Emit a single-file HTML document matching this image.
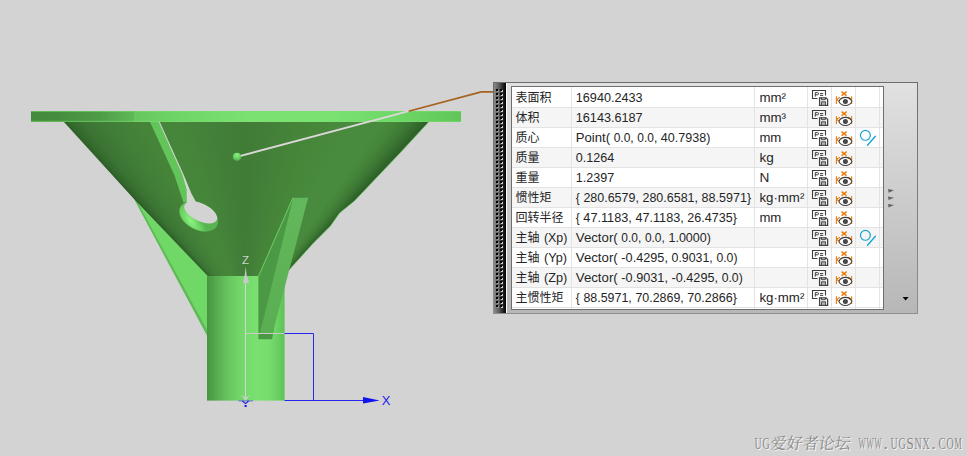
<!DOCTYPE html>
<html><head><meta charset="utf-8"><title>NX measure</title>
<style>html,body{margin:0;padding:0;background:#d3d3d3;overflow:hidden;font-family:"Liberation Sans",sans-serif}#c{position:relative;width:967px;height:456px;overflow:hidden;background:#d3d3d3}svg{display:block}</style>
</head><body><div id="c"><svg width="967" height="456" viewBox="0 0 967 456" style="position:absolute;left:0;top:0"><polygon points="134,198.8 209,277 209,337.6" fill="#6fd866"/><polygon points="134,198.8 136.8,200.8 206.5,329 208,337.6" fill="#5dbb55"/></svg><div style="position:absolute;left:0;top:0;width:967px;height:456px;background:#447f39;background:conic-gradient(from -43.10deg at 245.5px 316.0px, #2e6028 0.00deg, #346a2d 1.04deg, #3b7433 3.05deg, #417d38 7.26deg, #458439 14.62deg, #46863a 23.17deg, #437f39 34.19deg, #417c37 42.95deg, #437f39 50.28deg, #468639 61.44deg, #488a3e 71.35deg, #488b3e 78.55deg, #448438 81.20deg, #3d7935 83.32deg, #346b2d 85.00deg, #2c5d26 86.59deg, #2c5d26 360deg);clip-path:polygon(63.5px 121.5px, 134px 199px, 208px 276.3px, 284.5px 276.3px, 291px 267.7px, 312.9px 243.6px, 330.4px 226px, 339.5px 213px, 354.6px 200.8px, 374.3px 180px, 400px 152.9px, 429px 121.5px)"></div><svg width="967" height="456" viewBox="0 0 967 456" style="position:absolute;left:0;top:0" font-family="Liberation Sans, sans-serif"><defs>
<linearGradient id="gFl" x1="31" x2="461" y1="0" y2="0" gradientUnits="userSpaceOnUse">
<stop offset="0.0000" stop-color="#438a3c"/><stop offset="0.0674" stop-color="#468e3f"/><stop offset="0.1605" stop-color="#4e9b46"/><stop offset="0.2070" stop-color="#58ad50"/><stop offset="0.2384" stop-color="#5fb857"/><stop offset="0.2407" stop-color="#67c65f"/><stop offset="0.3465" stop-color="#6fd566"/><stop offset="0.5093" stop-color="#7be272"/><stop offset="0.6953" stop-color="#7be272"/><stop offset="0.8581" stop-color="#6dd665"/><stop offset="1.0000" stop-color="#5fc657"/>
</linearGradient>
<linearGradient id="gCone" x1="60" x2="430" y1="0" y2="0" gradientUnits="userSpaceOnUse">
<stop offset="0" stop-color="#386f30"/><stop offset="0.2" stop-color="#417c38"/><stop offset="0.45" stop-color="#478639"/>
<stop offset="0.62" stop-color="#498a3e"/><stop offset="0.8" stop-color="#437f39"/><stop offset="1" stop-color="#3a7332"/>
</linearGradient>
<linearGradient id="gCyl" x1="207" x2="284.5" y1="0" y2="0" gradientUnits="userSpaceOnUse">
<stop offset="0.000" stop-color="#489641"/><stop offset="0.065" stop-color="#4f9f48"/><stop offset="0.168" stop-color="#5cb454"/><stop offset="0.297" stop-color="#6ac862"/><stop offset="0.465" stop-color="#74d96b"/><stop offset="0.658" stop-color="#7ae171"/><stop offset="0.787" stop-color="#77de6e"/><stop offset="0.903" stop-color="#6bd163"/><stop offset="1.000" stop-color="#5fc257"/>
</linearGradient>
<linearGradient id="gGrip" x1="493" x2="506" y1="0" y2="0" gradientUnits="userSpaceOnUse">
<stop offset="0" stop-color="#929292"/><stop offset="0.45" stop-color="#5e5e5e"/><stop offset="0.8" stop-color="#1e1e1e"/><stop offset="1" stop-color="#000"/>
</linearGradient>
<linearGradient id="gPanel" x1="0" x2="0" y1="82" y2="314" gradientUnits="userSpaceOnUse">
<stop offset="0" stop-color="#e1e1e1"/><stop offset="1" stop-color="#b7b7b7"/>
</linearGradient>
<linearGradient id="gBorder" x1="0" x2="0" y1="82" y2="314" gradientUnits="userSpaceOnUse">
<stop offset="0" stop-color="#6c6c6c"/><stop offset="1" stop-color="#8e8e8e"/>
</linearGradient>
<radialGradient id="gRim" cx="193.5" cy="224" r="17" gradientUnits="userSpaceOnUse" gradientTransform="rotate(27 193.5 224) translate(193.5 224) scale(1.5 0.6) translate(-193.5 -224)">
<stop offset="0" stop-color="#8ef584"/><stop offset="0.45" stop-color="#70d868"/><stop offset="1" stop-color="#58b450"/></radialGradient>
<radialGradient id="gSph" cx="0.5" cy="0.28" r="0.8"><stop offset="0" stop-color="#84f27a"/><stop offset="0.5" stop-color="#6cd464"/><stop offset="1" stop-color="#4a9c43"/></radialGradient>
<pattern id="pDots" x="496" y="89" width="8" height="4" patternUnits="userSpaceOnUse">
<rect x="1" y="1" width="2" height="2" fill="#fff" fill-opacity="0.28"/><rect x="0" y="0" width="2" height="2" fill="#000"/>
<rect x="5" y="1" width="2" height="2" fill="#fff" fill-opacity="0.75"/><rect x="4" y="0" width="2" height="2" fill="#000"/>
</pattern>
<linearGradient id="gRib" x1="0" x2="0" y1="198" y2="338" gradientUnits="userSpaceOnUse">
<stop offset="0" stop-color="#62b85a"/><stop offset="1" stop-color="#5aae52"/></linearGradient>
</defs><path d="M428.6 122 L400 152.9 L374.3 180 L354.6 200.8 L339.5 213 L330.4 226 L312.9 243.6 L291 267.7" stroke="#5cbf54" stroke-width="0.9" stroke-opacity="0.75" fill="none"/><rect x="207" y="276" width="77.6" height="124.6" fill="url(#gCyl)"/><polygon points="293,197.7 258.4,276 258.4,339.2 272,339.2 273,334 293.6,197.7" fill="#4b9944"/><polygon points="293.3,197.7 308.2,197.7 272.4,334 259.8,334" fill="url(#gRib)"/><path d="M293 197.7 L258.6 276" stroke="#6fd866" stroke-width="0.9" fill="none"/><polygon points="149.8,121.5 158.6,121.5 182.4,175 186.4,189.3 187.3,202 183.5,202.5 174.3,175" fill="#62c55a"/><ellipse cx="198.7" cy="216.4" rx="20.7" ry="13.3" transform="rotate(27 198.7 216.4)" fill="url(#gRim)"/><polygon points="158.5,121.5 159.6,121.5 183.8,175 191.4,193.5 196,202 187,203.5 186.4,189.3 182.4,175" fill="#d2d8d0"/><ellipse cx="200.7" cy="212.4" rx="17.8" ry="8.8" transform="rotate(25.5 200.7 212.4)" fill="#d3d3d3"/><rect x="31" y="111" width="430" height="11" fill="url(#gFl)"/><rect x="31" y="120.8" width="430" height="1.1" fill="#7be272" fill-opacity="0.55"/><rect x="31" y="111" width="430" height="1" fill="#7be272" fill-opacity="0.5"/><path d="M237 156.8 L409.6 110.95" stroke="#dcd8da" stroke-width="1.9" fill="none"/><path d="M408.6 111.2 L481.3 91.9 L493.5 91.9" stroke="#a6621f" stroke-width="1.7" fill="none" stroke-linejoin="round"/><circle cx="237" cy="156.8" r="4.1" fill="url(#gSph)"/><path d="M245.5 276 V400" stroke="#d4d4d4" stroke-width="1" fill="none"/><path d="M245.5 333.5 H284.5" stroke="#c9c9c9" stroke-width="1" fill="none"/><polygon points="245.7,266.5 244.6,276 246.8,276" fill="#c4c4c4"/><polygon points="244.4,276 247,276 249.2,283 243,283" fill="#c8c8c8"/><path d="M284.5 333.5 H313.5 V400.5" stroke="#2626ee" stroke-width="1" fill="none"/><path d="M284.5 400.5 H364" stroke="#2626ee" stroke-width="1" fill="none"/><polygon points="363,397 379.6,400.5 363,403.4" fill="#1212ec"/><text x="381.8" y="404.6" font-size="13" fill="#1a1af2">X</text><text x="242" y="264.3" font-size="11.5" fill="#cdd6cb">Z</text><path d="M242 395.5 L245.5 399.8 L249.2 395.5" stroke="#d4d4d4" stroke-width="1" fill="none"/><polygon points="243.6,397.3 247.4,397.3 245.5,400.4" fill="#cfcfcf"/><path d="M238.5 400.9 H253" stroke="#2a2ae0" stroke-width="1" fill="none" stroke-opacity="0.6"/><path d="M242.4 401 L245.5 403.6 L248.6 401" stroke="#1a1ae0" stroke-width="1.1" fill="none"/><rect x="244.6" y="405" width="2" height="2" fill="#1010e8"/><rect x="493" y="82" width="425" height="232" fill="url(#gPanel)"/><rect x="493" y="82" width="13" height="232" fill="url(#gGrip)"/><rect x="496" y="89" width="8" height="219" fill="url(#pDots)"/><rect x="506" y="83" width="1" height="230" fill="#fff"/><rect x="493.5" y="82.5" width="424" height="231" fill="none" stroke="url(#gBorder)" stroke-width="1"/><rect x="511.5" y="86.5" width="372" height="223" fill="#fff" stroke="#6e6e6e" stroke-width="1"/><rect x="512" y="108" width="371" height="19" fill="#f5f5f5"/><rect x="512" y="148" width="371" height="19" fill="#f5f5f5"/><rect x="512" y="188" width="371" height="19" fill="#f5f5f5"/><rect x="512" y="228" width="371" height="19" fill="#f5f5f5"/><rect x="512" y="268" width="371" height="19" fill="#f5f5f5"/><rect x="512" y="107" width="371" height="1" fill="#e3e3e3"/><rect x="512" y="127" width="371" height="1" fill="#e3e3e3"/><rect x="512" y="147" width="371" height="1" fill="#e3e3e3"/><rect x="512" y="167" width="371" height="1" fill="#e3e3e3"/><rect x="512" y="187" width="371" height="1" fill="#e3e3e3"/><rect x="512" y="207" width="371" height="1" fill="#e3e3e3"/><rect x="512" y="227" width="371" height="1" fill="#e3e3e3"/><rect x="512" y="247" width="371" height="1" fill="#e3e3e3"/><rect x="512" y="267" width="371" height="1" fill="#e3e3e3"/><rect x="512" y="287" width="371" height="1" fill="#e3e3e3"/><rect x="512" y="307" width="371" height="1" fill="#e3e3e3"/><rect x="571" y="87" width="1" height="222" fill="#e3e3e3"/><rect x="754" y="87" width="1" height="222" fill="#e3e3e3"/><rect x="807" y="87" width="1" height="222" fill="#e3e3e3"/><rect x="831" y="87" width="1" height="222" fill="#e3e3e3"/><rect x="855" y="87" width="1" height="222" fill="#e3e3e3"/><rect x="879" y="87" width="1" height="222" fill="#e3e3e3"/><polygon points="888,189.1 894,190.3 888.6,192.70000000000002" fill="#505050" fill-opacity="0.85"/><polygon points="888,196.5 894,197.70000000000002 888.6,200.10000000000002" fill="#505050" fill-opacity="0.85"/><polygon points="888,203.89999999999998 894,205.1 888.6,207.5" fill="#505050" fill-opacity="0.85"/><polygon points="902.6,297 908.6,297 905.6,300.4" fill="#000"/><g transform="translate(0 87)" fill="none" stroke="#3e3e3e">
<path d="M817.5 11.5 H812.5 V3.5 H825.5 V8.4" stroke-width="1.1"/>
<path d="M815.3 9.6 V5.6 H817.4 Q818.6 5.6 818.6 6.7 Q818.6 7.8 817.4 7.8 H815.3" stroke-width="1"/>
<path d="M820 6.6 H823.2 M820 8.4 H823.2" stroke-width="1"/>
<path d="M819.6 10.8 H826 L827.6 12.4 V18.3 H819.6 Z" fill="#fff" stroke-width="1.3"/>
<path d="M821.5 10.8 V12.7 H825.3 V10.8" stroke-width="1"/>
<rect x="821.6" y="14.8" width="3.9" height="3.5" fill="#b4b4b4" stroke-width="0.9"/>
</g><g transform="translate(0 87)" fill="none">
<path d="M841.6 4.6 L846.6 8.7 M846.6 4.6 L841.6 8.7" stroke="#ee7800" stroke-width="1.45"/>
<path d="M836.4 9.2 V16.9 M836.6 12.6 L839.8 10.2 M836.6 12.6 L839.8 14.6" stroke="#ee7800" stroke-width="1.1"/>
<path d="M851.6 9.2 V16.9 M851.4 12.6 L848.4 10.2" stroke="#ee7800" stroke-width="1.1"/>
<path d="M838.9 14.4 C841.2 9.0 849.6 9.0 851.9 14.4 C849.6 19.9 841.2 19.9 838.9 14.4 Z" fill="#fff" stroke="#3e3e3e" stroke-width="1.1"/>
<circle cx="845.4" cy="14.4" r="2.5" fill="#474747"/>
</g><g transform="translate(0 107)" fill="none" stroke="#3e3e3e">
<path d="M817.5 11.5 H812.5 V3.5 H825.5 V8.4" stroke-width="1.1"/>
<path d="M815.3 9.6 V5.6 H817.4 Q818.6 5.6 818.6 6.7 Q818.6 7.8 817.4 7.8 H815.3" stroke-width="1"/>
<path d="M820 6.6 H823.2 M820 8.4 H823.2" stroke-width="1"/>
<path d="M819.6 10.8 H826 L827.6 12.4 V18.3 H819.6 Z" fill="#fff" stroke-width="1.3"/>
<path d="M821.5 10.8 V12.7 H825.3 V10.8" stroke-width="1"/>
<rect x="821.6" y="14.8" width="3.9" height="3.5" fill="#b4b4b4" stroke-width="0.9"/>
</g><g transform="translate(0 107)" fill="none">
<path d="M841.6 4.6 L846.6 8.7 M846.6 4.6 L841.6 8.7" stroke="#ee7800" stroke-width="1.45"/>
<path d="M836.4 9.2 V16.9 M836.6 12.6 L839.8 10.2 M836.6 12.6 L839.8 14.6" stroke="#ee7800" stroke-width="1.1"/>
<path d="M851.6 9.2 V16.9 M851.4 12.6 L848.4 10.2" stroke="#ee7800" stroke-width="1.1"/>
<path d="M838.9 14.4 C841.2 9.0 849.6 9.0 851.9 14.4 C849.6 19.9 841.2 19.9 838.9 14.4 Z" fill="#fff" stroke="#3e3e3e" stroke-width="1.1"/>
<circle cx="845.4" cy="14.4" r="2.5" fill="#474747"/>
</g><g transform="translate(0 127)" fill="none" stroke="#3e3e3e">
<path d="M817.5 11.5 H812.5 V3.5 H825.5 V8.4" stroke-width="1.1"/>
<path d="M815.3 9.6 V5.6 H817.4 Q818.6 5.6 818.6 6.7 Q818.6 7.8 817.4 7.8 H815.3" stroke-width="1"/>
<path d="M820 6.6 H823.2 M820 8.4 H823.2" stroke-width="1"/>
<path d="M819.6 10.8 H826 L827.6 12.4 V18.3 H819.6 Z" fill="#fff" stroke-width="1.3"/>
<path d="M821.5 10.8 V12.7 H825.3 V10.8" stroke-width="1"/>
<rect x="821.6" y="14.8" width="3.9" height="3.5" fill="#b4b4b4" stroke-width="0.9"/>
</g><g transform="translate(0 127)" fill="none">
<path d="M841.6 4.6 L846.6 8.7 M846.6 4.6 L841.6 8.7" stroke="#ee7800" stroke-width="1.45"/>
<path d="M836.4 9.2 V16.9 M836.6 12.6 L839.8 10.2 M836.6 12.6 L839.8 14.6" stroke="#ee7800" stroke-width="1.1"/>
<path d="M851.6 9.2 V16.9 M851.4 12.6 L848.4 10.2" stroke="#ee7800" stroke-width="1.1"/>
<path d="M838.9 14.4 C841.2 9.0 849.6 9.0 851.9 14.4 C849.6 19.9 841.2 19.9 838.9 14.4 Z" fill="#fff" stroke="#3e3e3e" stroke-width="1.1"/>
<circle cx="845.4" cy="14.4" r="2.5" fill="#474747"/>
</g><g transform="translate(0 127)" fill="none" stroke="#12a4cf" stroke-linecap="round">
<circle cx="865.4" cy="8.3" r="4.95" stroke-width="1.2"/>
<path d="M867.5 18.3 L875.4 9.3" stroke-width="1.3"/>
</g><g transform="translate(0 147)" fill="none" stroke="#3e3e3e">
<path d="M817.5 11.5 H812.5 V3.5 H825.5 V8.4" stroke-width="1.1"/>
<path d="M815.3 9.6 V5.6 H817.4 Q818.6 5.6 818.6 6.7 Q818.6 7.8 817.4 7.8 H815.3" stroke-width="1"/>
<path d="M820 6.6 H823.2 M820 8.4 H823.2" stroke-width="1"/>
<path d="M819.6 10.8 H826 L827.6 12.4 V18.3 H819.6 Z" fill="#fff" stroke-width="1.3"/>
<path d="M821.5 10.8 V12.7 H825.3 V10.8" stroke-width="1"/>
<rect x="821.6" y="14.8" width="3.9" height="3.5" fill="#b4b4b4" stroke-width="0.9"/>
</g><g transform="translate(0 147)" fill="none">
<path d="M841.6 4.6 L846.6 8.7 M846.6 4.6 L841.6 8.7" stroke="#ee7800" stroke-width="1.45"/>
<path d="M836.4 9.2 V16.9 M836.6 12.6 L839.8 10.2 M836.6 12.6 L839.8 14.6" stroke="#ee7800" stroke-width="1.1"/>
<path d="M851.6 9.2 V16.9 M851.4 12.6 L848.4 10.2" stroke="#ee7800" stroke-width="1.1"/>
<path d="M838.9 14.4 C841.2 9.0 849.6 9.0 851.9 14.4 C849.6 19.9 841.2 19.9 838.9 14.4 Z" fill="#fff" stroke="#3e3e3e" stroke-width="1.1"/>
<circle cx="845.4" cy="14.4" r="2.5" fill="#474747"/>
</g><g transform="translate(0 167)" fill="none" stroke="#3e3e3e">
<path d="M817.5 11.5 H812.5 V3.5 H825.5 V8.4" stroke-width="1.1"/>
<path d="M815.3 9.6 V5.6 H817.4 Q818.6 5.6 818.6 6.7 Q818.6 7.8 817.4 7.8 H815.3" stroke-width="1"/>
<path d="M820 6.6 H823.2 M820 8.4 H823.2" stroke-width="1"/>
<path d="M819.6 10.8 H826 L827.6 12.4 V18.3 H819.6 Z" fill="#fff" stroke-width="1.3"/>
<path d="M821.5 10.8 V12.7 H825.3 V10.8" stroke-width="1"/>
<rect x="821.6" y="14.8" width="3.9" height="3.5" fill="#b4b4b4" stroke-width="0.9"/>
</g><g transform="translate(0 167)" fill="none">
<path d="M841.6 4.6 L846.6 8.7 M846.6 4.6 L841.6 8.7" stroke="#ee7800" stroke-width="1.45"/>
<path d="M836.4 9.2 V16.9 M836.6 12.6 L839.8 10.2 M836.6 12.6 L839.8 14.6" stroke="#ee7800" stroke-width="1.1"/>
<path d="M851.6 9.2 V16.9 M851.4 12.6 L848.4 10.2" stroke="#ee7800" stroke-width="1.1"/>
<path d="M838.9 14.4 C841.2 9.0 849.6 9.0 851.9 14.4 C849.6 19.9 841.2 19.9 838.9 14.4 Z" fill="#fff" stroke="#3e3e3e" stroke-width="1.1"/>
<circle cx="845.4" cy="14.4" r="2.5" fill="#474747"/>
</g><g transform="translate(0 187)" fill="none" stroke="#3e3e3e">
<path d="M817.5 11.5 H812.5 V3.5 H825.5 V8.4" stroke-width="1.1"/>
<path d="M815.3 9.6 V5.6 H817.4 Q818.6 5.6 818.6 6.7 Q818.6 7.8 817.4 7.8 H815.3" stroke-width="1"/>
<path d="M820 6.6 H823.2 M820 8.4 H823.2" stroke-width="1"/>
<path d="M819.6 10.8 H826 L827.6 12.4 V18.3 H819.6 Z" fill="#fff" stroke-width="1.3"/>
<path d="M821.5 10.8 V12.7 H825.3 V10.8" stroke-width="1"/>
<rect x="821.6" y="14.8" width="3.9" height="3.5" fill="#b4b4b4" stroke-width="0.9"/>
</g><g transform="translate(0 187)" fill="none">
<path d="M841.6 4.6 L846.6 8.7 M846.6 4.6 L841.6 8.7" stroke="#ee7800" stroke-width="1.45"/>
<path d="M836.4 9.2 V16.9 M836.6 12.6 L839.8 10.2 M836.6 12.6 L839.8 14.6" stroke="#ee7800" stroke-width="1.1"/>
<path d="M851.6 9.2 V16.9 M851.4 12.6 L848.4 10.2" stroke="#ee7800" stroke-width="1.1"/>
<path d="M838.9 14.4 C841.2 9.0 849.6 9.0 851.9 14.4 C849.6 19.9 841.2 19.9 838.9 14.4 Z" fill="#fff" stroke="#3e3e3e" stroke-width="1.1"/>
<circle cx="845.4" cy="14.4" r="2.5" fill="#474747"/>
</g><g transform="translate(0 207)" fill="none" stroke="#3e3e3e">
<path d="M817.5 11.5 H812.5 V3.5 H825.5 V8.4" stroke-width="1.1"/>
<path d="M815.3 9.6 V5.6 H817.4 Q818.6 5.6 818.6 6.7 Q818.6 7.8 817.4 7.8 H815.3" stroke-width="1"/>
<path d="M820 6.6 H823.2 M820 8.4 H823.2" stroke-width="1"/>
<path d="M819.6 10.8 H826 L827.6 12.4 V18.3 H819.6 Z" fill="#fff" stroke-width="1.3"/>
<path d="M821.5 10.8 V12.7 H825.3 V10.8" stroke-width="1"/>
<rect x="821.6" y="14.8" width="3.9" height="3.5" fill="#b4b4b4" stroke-width="0.9"/>
</g><g transform="translate(0 207)" fill="none">
<path d="M841.6 4.6 L846.6 8.7 M846.6 4.6 L841.6 8.7" stroke="#ee7800" stroke-width="1.45"/>
<path d="M836.4 9.2 V16.9 M836.6 12.6 L839.8 10.2 M836.6 12.6 L839.8 14.6" stroke="#ee7800" stroke-width="1.1"/>
<path d="M851.6 9.2 V16.9 M851.4 12.6 L848.4 10.2" stroke="#ee7800" stroke-width="1.1"/>
<path d="M838.9 14.4 C841.2 9.0 849.6 9.0 851.9 14.4 C849.6 19.9 841.2 19.9 838.9 14.4 Z" fill="#fff" stroke="#3e3e3e" stroke-width="1.1"/>
<circle cx="845.4" cy="14.4" r="2.5" fill="#474747"/>
</g><g transform="translate(0 227)" fill="none" stroke="#3e3e3e">
<path d="M817.5 11.5 H812.5 V3.5 H825.5 V8.4" stroke-width="1.1"/>
<path d="M815.3 9.6 V5.6 H817.4 Q818.6 5.6 818.6 6.7 Q818.6 7.8 817.4 7.8 H815.3" stroke-width="1"/>
<path d="M820 6.6 H823.2 M820 8.4 H823.2" stroke-width="1"/>
<path d="M819.6 10.8 H826 L827.6 12.4 V18.3 H819.6 Z" fill="#fff" stroke-width="1.3"/>
<path d="M821.5 10.8 V12.7 H825.3 V10.8" stroke-width="1"/>
<rect x="821.6" y="14.8" width="3.9" height="3.5" fill="#b4b4b4" stroke-width="0.9"/>
</g><g transform="translate(0 227)" fill="none">
<path d="M841.6 4.6 L846.6 8.7 M846.6 4.6 L841.6 8.7" stroke="#ee7800" stroke-width="1.45"/>
<path d="M836.4 9.2 V16.9 M836.6 12.6 L839.8 10.2 M836.6 12.6 L839.8 14.6" stroke="#ee7800" stroke-width="1.1"/>
<path d="M851.6 9.2 V16.9 M851.4 12.6 L848.4 10.2" stroke="#ee7800" stroke-width="1.1"/>
<path d="M838.9 14.4 C841.2 9.0 849.6 9.0 851.9 14.4 C849.6 19.9 841.2 19.9 838.9 14.4 Z" fill="#fff" stroke="#3e3e3e" stroke-width="1.1"/>
<circle cx="845.4" cy="14.4" r="2.5" fill="#474747"/>
</g><g transform="translate(0 227)" fill="none" stroke="#12a4cf" stroke-linecap="round">
<circle cx="865.4" cy="8.3" r="4.95" stroke-width="1.2"/>
<path d="M867.5 18.3 L875.4 9.3" stroke-width="1.3"/>
</g><g transform="translate(0 247)" fill="none" stroke="#3e3e3e">
<path d="M817.5 11.5 H812.5 V3.5 H825.5 V8.4" stroke-width="1.1"/>
<path d="M815.3 9.6 V5.6 H817.4 Q818.6 5.6 818.6 6.7 Q818.6 7.8 817.4 7.8 H815.3" stroke-width="1"/>
<path d="M820 6.6 H823.2 M820 8.4 H823.2" stroke-width="1"/>
<path d="M819.6 10.8 H826 L827.6 12.4 V18.3 H819.6 Z" fill="#fff" stroke-width="1.3"/>
<path d="M821.5 10.8 V12.7 H825.3 V10.8" stroke-width="1"/>
<rect x="821.6" y="14.8" width="3.9" height="3.5" fill="#b4b4b4" stroke-width="0.9"/>
</g><g transform="translate(0 247)" fill="none">
<path d="M841.6 4.6 L846.6 8.7 M846.6 4.6 L841.6 8.7" stroke="#ee7800" stroke-width="1.45"/>
<path d="M836.4 9.2 V16.9 M836.6 12.6 L839.8 10.2 M836.6 12.6 L839.8 14.6" stroke="#ee7800" stroke-width="1.1"/>
<path d="M851.6 9.2 V16.9 M851.4 12.6 L848.4 10.2" stroke="#ee7800" stroke-width="1.1"/>
<path d="M838.9 14.4 C841.2 9.0 849.6 9.0 851.9 14.4 C849.6 19.9 841.2 19.9 838.9 14.4 Z" fill="#fff" stroke="#3e3e3e" stroke-width="1.1"/>
<circle cx="845.4" cy="14.4" r="2.5" fill="#474747"/>
</g><g transform="translate(0 267)" fill="none" stroke="#3e3e3e">
<path d="M817.5 11.5 H812.5 V3.5 H825.5 V8.4" stroke-width="1.1"/>
<path d="M815.3 9.6 V5.6 H817.4 Q818.6 5.6 818.6 6.7 Q818.6 7.8 817.4 7.8 H815.3" stroke-width="1"/>
<path d="M820 6.6 H823.2 M820 8.4 H823.2" stroke-width="1"/>
<path d="M819.6 10.8 H826 L827.6 12.4 V18.3 H819.6 Z" fill="#fff" stroke-width="1.3"/>
<path d="M821.5 10.8 V12.7 H825.3 V10.8" stroke-width="1"/>
<rect x="821.6" y="14.8" width="3.9" height="3.5" fill="#b4b4b4" stroke-width="0.9"/>
</g><g transform="translate(0 267)" fill="none">
<path d="M841.6 4.6 L846.6 8.7 M846.6 4.6 L841.6 8.7" stroke="#ee7800" stroke-width="1.45"/>
<path d="M836.4 9.2 V16.9 M836.6 12.6 L839.8 10.2 M836.6 12.6 L839.8 14.6" stroke="#ee7800" stroke-width="1.1"/>
<path d="M851.6 9.2 V16.9 M851.4 12.6 L848.4 10.2" stroke="#ee7800" stroke-width="1.1"/>
<path d="M838.9 14.4 C841.2 9.0 849.6 9.0 851.9 14.4 C849.6 19.9 841.2 19.9 838.9 14.4 Z" fill="#fff" stroke="#3e3e3e" stroke-width="1.1"/>
<circle cx="845.4" cy="14.4" r="2.5" fill="#474747"/>
</g><g transform="translate(0 287)" fill="none" stroke="#3e3e3e">
<path d="M817.5 11.5 H812.5 V3.5 H825.5 V8.4" stroke-width="1.1"/>
<path d="M815.3 9.6 V5.6 H817.4 Q818.6 5.6 818.6 6.7 Q818.6 7.8 817.4 7.8 H815.3" stroke-width="1"/>
<path d="M820 6.6 H823.2 M820 8.4 H823.2" stroke-width="1"/>
<path d="M819.6 10.8 H826 L827.6 12.4 V18.3 H819.6 Z" fill="#fff" stroke-width="1.3"/>
<path d="M821.5 10.8 V12.7 H825.3 V10.8" stroke-width="1"/>
<rect x="821.6" y="14.8" width="3.9" height="3.5" fill="#b4b4b4" stroke-width="0.9"/>
</g><g transform="translate(0 287)" fill="none">
<path d="M841.6 4.6 L846.6 8.7 M846.6 4.6 L841.6 8.7" stroke="#ee7800" stroke-width="1.45"/>
<path d="M836.4 9.2 V16.9 M836.6 12.6 L839.8 10.2 M836.6 12.6 L839.8 14.6" stroke="#ee7800" stroke-width="1.1"/>
<path d="M851.6 9.2 V16.9 M851.4 12.6 L848.4 10.2" stroke="#ee7800" stroke-width="1.1"/>
<path d="M838.9 14.4 C841.2 9.0 849.6 9.0 851.9 14.4 C849.6 19.9 841.2 19.9 838.9 14.4 Z" fill="#fff" stroke="#3e3e3e" stroke-width="1.1"/>
<circle cx="845.4" cy="14.4" r="2.5" fill="#474747"/>
</g><text x="515.6" y="102.05" font-size="12" fill="#252525" font-family="Liberation Sans, Noto Sans CJK SC, sans-serif">表面积</text><text x="575.80" y="101.90" font-size="12.6" fill="#252525" textLength="66.85" lengthAdjust="spacingAndGlyphs" xml:space="preserve">16940.2433</text><text x="759.40" y="101.90" font-size="12.6" fill="#252525" textLength="26.66" lengthAdjust="spacingAndGlyphs" xml:space="preserve">mm²</text><text x="515.6" y="122.05" font-size="12" fill="#252525" font-family="Liberation Sans, Noto Sans CJK SC, sans-serif">体积</text><text x="575.80" y="121.90" font-size="12.6" fill="#252525" textLength="66.85" lengthAdjust="spacingAndGlyphs" xml:space="preserve">16143.6187</text><text x="759.40" y="121.90" font-size="12.6" fill="#252525" textLength="26.66" lengthAdjust="spacingAndGlyphs" xml:space="preserve">mm³</text><text x="515.6" y="142.05" font-size="12" fill="#252525" font-family="Liberation Sans, Noto Sans CJK SC, sans-serif">质心</text><text x="575.80" y="141.90" font-size="12.6" fill="#252525" textLength="34.31" lengthAdjust="spacingAndGlyphs" xml:space="preserve">Point(</text><text x="613.72" y="141.90" font-size="12.6" fill="#252525" textLength="19.94" lengthAdjust="spacingAndGlyphs" xml:space="preserve">0.0,</text><text x="637.27" y="141.90" font-size="12.6" fill="#252525" textLength="19.94" lengthAdjust="spacingAndGlyphs" xml:space="preserve">0.0,</text><text x="660.82" y="141.90" font-size="12.6" fill="#252525" textLength="49.50" lengthAdjust="spacingAndGlyphs" xml:space="preserve">40.7938)</text><text x="759.40" y="141.90" font-size="12.6" fill="#252525" textLength="21.90" lengthAdjust="spacingAndGlyphs" xml:space="preserve">mm</text><text x="515.6" y="162.05" font-size="12" fill="#252525" font-family="Liberation Sans, Noto Sans CJK SC, sans-serif">质量</text><text x="575.80" y="161.90" font-size="12.6" fill="#252525" textLength="38.41" lengthAdjust="spacingAndGlyphs" xml:space="preserve">0.1264</text><text x="759.40" y="161.90" font-size="12.6" fill="#252525" textLength="14.31" lengthAdjust="spacingAndGlyphs" xml:space="preserve">kg</text><text x="515.6" y="182.05" font-size="12" fill="#252525" font-family="Liberation Sans, Noto Sans CJK SC, sans-serif">重量</text><text x="575.80" y="181.90" font-size="12.6" fill="#252525" textLength="38.41" lengthAdjust="spacingAndGlyphs" xml:space="preserve">1.2397</text><text x="759.40" y="181.90" font-size="12.6" fill="#252525" textLength="9.87" lengthAdjust="spacingAndGlyphs" xml:space="preserve">N</text><text x="515.6" y="202.05" font-size="12" fill="#252525" font-family="Liberation Sans, Noto Sans CJK SC, sans-serif">惯性矩</text><text x="575.80" y="201.90" font-size="12.6" fill="#252525" textLength="3.98" lengthAdjust="spacingAndGlyphs" xml:space="preserve">{</text><text x="583.39" y="201.90" font-size="12.6" fill="#252525" textLength="55.49" lengthAdjust="spacingAndGlyphs" xml:space="preserve">280.6579,</text><text x="642.49" y="201.90" font-size="12.6" fill="#252525" textLength="55.49" lengthAdjust="spacingAndGlyphs" xml:space="preserve">280.6581,</text><text x="701.59" y="201.90" font-size="12.6" fill="#252525" textLength="49.50" lengthAdjust="spacingAndGlyphs" xml:space="preserve">88.5971}</text><text x="759.40" y="201.90" font-size="12.6" fill="#252525" textLength="44.90" lengthAdjust="spacingAndGlyphs" xml:space="preserve">kg·mm²</text><text x="515.6" y="222.05" font-size="12" fill="#252525" font-family="Liberation Sans, Noto Sans CJK SC, sans-serif">回转半径</text><text x="575.80" y="221.90" font-size="12.6" fill="#252525" textLength="3.98" lengthAdjust="spacingAndGlyphs" xml:space="preserve">{</text><text x="583.39" y="221.90" font-size="12.6" fill="#252525" textLength="48.38" lengthAdjust="spacingAndGlyphs" xml:space="preserve">47.1183,</text><text x="635.38" y="221.90" font-size="12.6" fill="#252525" textLength="48.38" lengthAdjust="spacingAndGlyphs" xml:space="preserve">47.1183,</text><text x="687.37" y="221.90" font-size="12.6" fill="#252525" textLength="49.50" lengthAdjust="spacingAndGlyphs" xml:space="preserve">26.4735}</text><text x="759.40" y="221.90" font-size="12.6" fill="#252525" textLength="21.90" lengthAdjust="spacingAndGlyphs" xml:space="preserve">mm</text><text x="515.6" y="242.05" font-size="12" fill="#252525" font-family="Liberation Sans, Noto Sans CJK SC, sans-serif">主轴</text><text x="544.00" y="241.90" font-size="12.6" fill="#252525" textLength="23.38" lengthAdjust="spacingAndGlyphs" xml:space="preserve">(Xp)</text><text x="575.80" y="241.90" font-size="12.6" fill="#252525" textLength="41.94" lengthAdjust="spacingAndGlyphs" xml:space="preserve">Vector(</text><text x="621.36" y="241.90" font-size="12.6" fill="#252525" textLength="19.94" lengthAdjust="spacingAndGlyphs" xml:space="preserve">0.0,</text><text x="644.91" y="241.90" font-size="12.6" fill="#252525" textLength="19.94" lengthAdjust="spacingAndGlyphs" xml:space="preserve">0.0,</text><text x="668.46" y="241.90" font-size="12.6" fill="#252525" textLength="42.39" lengthAdjust="spacingAndGlyphs" xml:space="preserve">1.0000)</text><text x="515.6" y="262.05" font-size="12" fill="#252525" font-family="Liberation Sans, Noto Sans CJK SC, sans-serif">主轴</text><text x="544.00" y="261.90" font-size="12.6" fill="#252525" textLength="23.01" lengthAdjust="spacingAndGlyphs" xml:space="preserve">(Yp)</text><text x="575.80" y="261.90" font-size="12.6" fill="#252525" textLength="41.94" lengthAdjust="spacingAndGlyphs" xml:space="preserve">Vector(</text><text x="621.36" y="261.90" font-size="12.6" fill="#252525" textLength="46.55" lengthAdjust="spacingAndGlyphs" xml:space="preserve">-0.4295,</text><text x="671.52" y="261.90" font-size="12.6" fill="#252525" textLength="41.27" lengthAdjust="spacingAndGlyphs" xml:space="preserve">0.9031,</text><text x="716.40" y="261.90" font-size="12.6" fill="#252525" textLength="21.06" lengthAdjust="spacingAndGlyphs" xml:space="preserve">0.0)</text><text x="515.6" y="282.05" font-size="12" fill="#252525" font-family="Liberation Sans, Noto Sans CJK SC, sans-serif">主轴</text><text x="544.00" y="281.90" font-size="12.6" fill="#252525" textLength="23.24" lengthAdjust="spacingAndGlyphs" xml:space="preserve">(Zp)</text><text x="575.80" y="281.90" font-size="12.6" fill="#252525" textLength="41.94" lengthAdjust="spacingAndGlyphs" xml:space="preserve">Vector(</text><text x="621.36" y="281.90" font-size="12.6" fill="#252525" textLength="46.55" lengthAdjust="spacingAndGlyphs" xml:space="preserve">-0.9031,</text><text x="671.52" y="281.90" font-size="12.6" fill="#252525" textLength="46.55" lengthAdjust="spacingAndGlyphs" xml:space="preserve">-0.4295,</text><text x="721.68" y="281.90" font-size="12.6" fill="#252525" textLength="21.06" lengthAdjust="spacingAndGlyphs" xml:space="preserve">0.0)</text><text x="515.6" y="302.05" font-size="12" fill="#252525" font-family="Liberation Sans, Noto Sans CJK SC, sans-serif">主惯性矩</text><text x="575.80" y="301.90" font-size="12.6" fill="#252525" textLength="3.98" lengthAdjust="spacingAndGlyphs" xml:space="preserve">{</text><text x="583.39" y="301.90" font-size="12.6" fill="#252525" textLength="48.38" lengthAdjust="spacingAndGlyphs" xml:space="preserve">88.5971,</text><text x="635.38" y="301.90" font-size="12.6" fill="#252525" textLength="48.38" lengthAdjust="spacingAndGlyphs" xml:space="preserve">70.2869,</text><text x="687.37" y="301.90" font-size="12.6" fill="#252525" textLength="49.50" lengthAdjust="spacingAndGlyphs" xml:space="preserve">70.2866}</text><text x="759.40" y="301.90" font-size="12.6" fill="#252525" textLength="44.90" lengthAdjust="spacingAndGlyphs" xml:space="preserve">kg·mm²</text><g transform="translate(1 1)" fill="#f6f6f6" font-family="Liberation Serif, serif" font-size="17.5"><text x="754.4" y="449.3" textLength="7.2" lengthAdjust="spacingAndGlyphs">U</text><text x="762.4" y="449.3" textLength="7.2" lengthAdjust="spacingAndGlyphs">G</text><g transform="translate(770 448.6) skewX(-8) translate(-770 -448.6)"><text x="770" y="448.6" font-size="16" fill="#f6f6f6" font-family="Liberation Serif, Noto Serif CJK SC, serif" textLength="80" lengthAdjust="spacing">爱好者论坛</text></g><text x="858.4" y="449.3" textLength="7.2" lengthAdjust="spacingAndGlyphs">W</text><text x="866.4" y="449.3" textLength="7.2" lengthAdjust="spacingAndGlyphs">W</text><text x="874.4" y="449.3" textLength="7.2" lengthAdjust="spacingAndGlyphs">W</text><text x="883.5" y="449.3">.</text><text x="890.4" y="449.3" textLength="7.2" lengthAdjust="spacingAndGlyphs">U</text><text x="898.4" y="449.3" textLength="7.2" lengthAdjust="spacingAndGlyphs">G</text><text x="906.4" y="449.3" textLength="7.2" lengthAdjust="spacingAndGlyphs">S</text><text x="914.4" y="449.3" textLength="7.2" lengthAdjust="spacingAndGlyphs">N</text><text x="922.4" y="449.3" textLength="7.2" lengthAdjust="spacingAndGlyphs">X</text><text x="931.5" y="449.3">.</text><text x="938.4" y="449.3" textLength="7.2" lengthAdjust="spacingAndGlyphs">C</text><text x="946.4" y="449.3" textLength="7.2" lengthAdjust="spacingAndGlyphs">O</text><text x="954.4" y="449.3" textLength="7.2" lengthAdjust="spacingAndGlyphs">M</text></g><g transform="translate(0 0)" fill="#8a8a8a" font-family="Liberation Serif, serif" font-size="17.5"><text x="754.4" y="449.3" textLength="7.2" lengthAdjust="spacingAndGlyphs">U</text><text x="762.4" y="449.3" textLength="7.2" lengthAdjust="spacingAndGlyphs">G</text><g transform="translate(770 448.6) skewX(-8) translate(-770 -448.6)"><text x="770" y="448.6" font-size="16" fill="#8a8a8a" font-family="Liberation Serif, Noto Serif CJK SC, serif" textLength="80" lengthAdjust="spacing">爱好者论坛</text></g><text x="858.4" y="449.3" textLength="7.2" lengthAdjust="spacingAndGlyphs">W</text><text x="866.4" y="449.3" textLength="7.2" lengthAdjust="spacingAndGlyphs">W</text><text x="874.4" y="449.3" textLength="7.2" lengthAdjust="spacingAndGlyphs">W</text><text x="883.5" y="449.3">.</text><text x="890.4" y="449.3" textLength="7.2" lengthAdjust="spacingAndGlyphs">U</text><text x="898.4" y="449.3" textLength="7.2" lengthAdjust="spacingAndGlyphs">G</text><text x="906.4" y="449.3" textLength="7.2" lengthAdjust="spacingAndGlyphs">S</text><text x="914.4" y="449.3" textLength="7.2" lengthAdjust="spacingAndGlyphs">N</text><text x="922.4" y="449.3" textLength="7.2" lengthAdjust="spacingAndGlyphs">X</text><text x="931.5" y="449.3">.</text><text x="938.4" y="449.3" textLength="7.2" lengthAdjust="spacingAndGlyphs">C</text><text x="946.4" y="449.3" textLength="7.2" lengthAdjust="spacingAndGlyphs">O</text><text x="954.4" y="449.3" textLength="7.2" lengthAdjust="spacingAndGlyphs">M</text></g></svg></div></body></html>
